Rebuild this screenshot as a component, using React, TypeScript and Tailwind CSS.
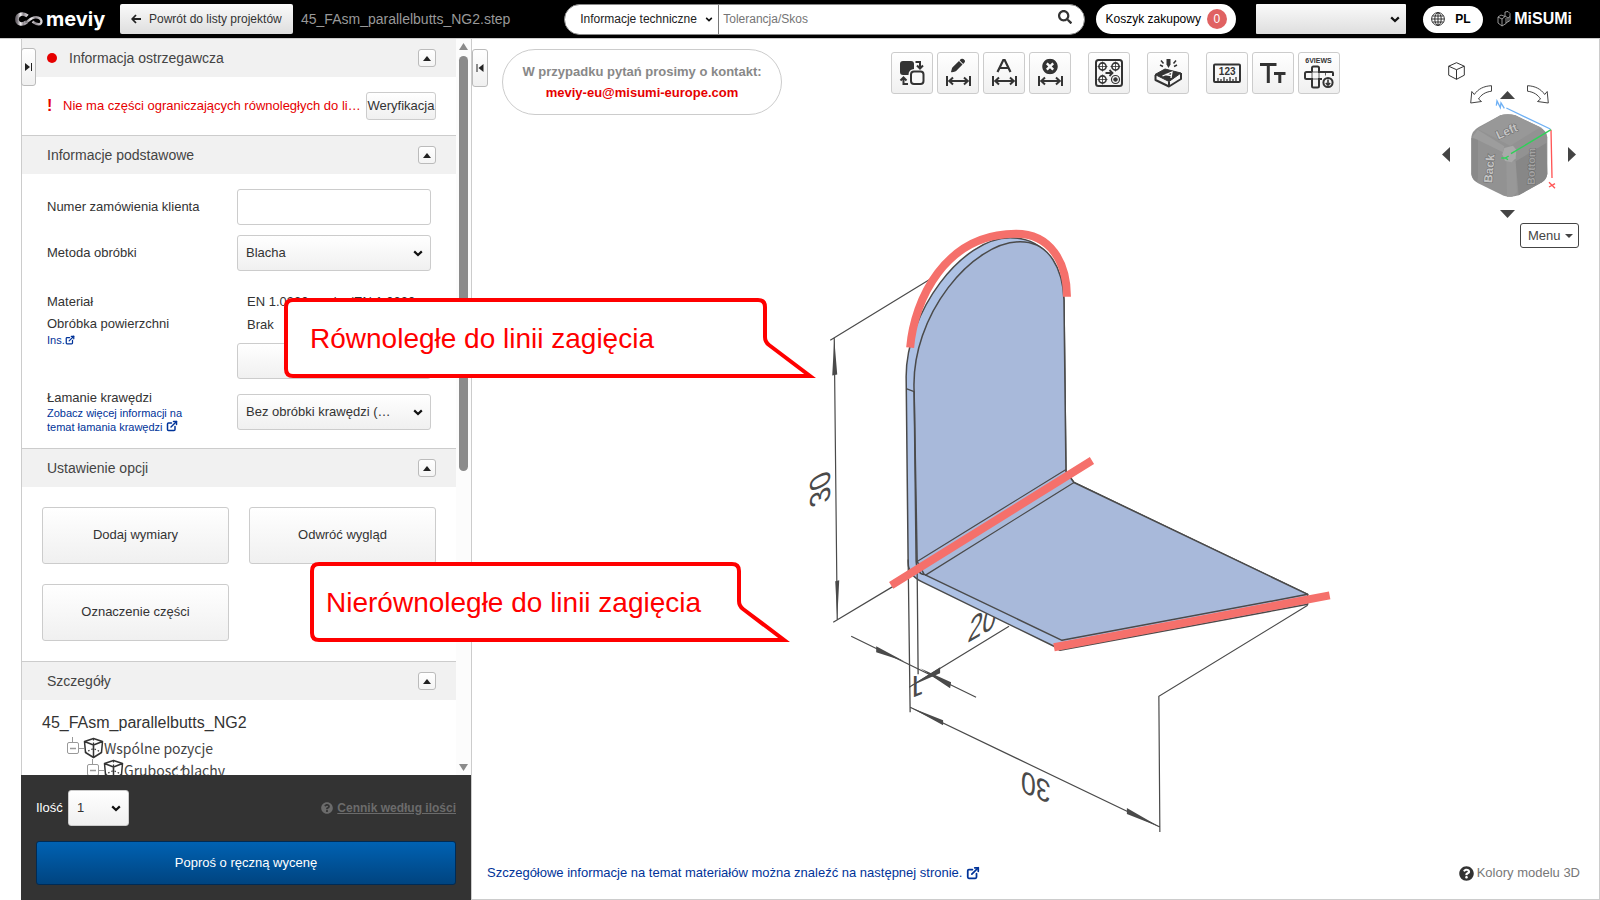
import React from 'react';
import { FaQuestionCircle, FaSearch, FaTimesCircle } from 'react-icons/fa';
import { FaPen } from 'react-icons/fa6';
import { FiExternalLink } from 'react-icons/fi';

const INK = '#333333';
const LINE = '#4a4a4a';
const MARK = '#f5706b';

function Chevron({ className = '' }: { className?: string }) {
  return (
    <svg viewBox="0 0 10 7" className={`pointer-events-none h-[7px] w-[10px] ${className}`} aria-hidden="true">
      <path d="M1.2 1.4 5 5l3.800-3.600" fill="none" stroke="#111" strokeWidth="2.200" />
    </svg>
  );
}

type SelectProps = { id?: string; label?: string; value: string; box: string };

function Select({ id, label, value, box }: SelectProps) {
  return (
    <div className="relative flex items-center">
      <select
        id={id}
        aria-label={label}
        className={`w-full appearance-none border border-[#ccc] bg-linear-to-b from-white to-[#f0f0f0] pl-2 text-[13px] text-[#333] ${box}`}
      >
        <option>{value}</option>
      </select>
      <Chevron className="absolute right-2" />
    </div>
  );
}

function Section({ title, first, alert, children }: { title: string; first?: boolean; alert?: boolean; children: React.ReactNode }) {
  return (
    <section>
      <div className={`flex items-center bg-[#f1f1f1] pr-5 pl-[25px] ${first ? 'h-[38px]' : 'h-[39px] border-t border-[#ccc]'}`}>
        {alert && <span className="mr-3 size-[10px] rounded-full bg-[#e60000]" />}
        <h2 className="text-[14px] text-[#444]">{title}</h2>
        <button
          aria-label={`Zwiń: ${title}`}
          className="ml-auto flex size-[18px] items-center justify-center rounded-[3px] border border-[#bbb] bg-linear-to-b from-white to-[#f4f4f4]"
        >
          <svg viewBox="0 0 8 5" className="h-[5px] w-2" aria-hidden="true">
            <path d="M0 5 4 0l4 5z" fill="#222" />
          </svg>
        </button>
      </div>
      {children}
    </section>
  );
}

function OptionButton({ children }: { children: React.ReactNode }) {
  return (
    <button className="h-[57px] rounded-[3px] border border-[#ccc] bg-linear-to-b from-white to-[#f0f0f0] pb-[2px] text-[13px] text-[#333]">
      {children}
    </button>
  );
}

function TreeRow({ children, indent }: { children: React.ReactNode; indent: string }) {
  return (
    <li className={`flex h-[22px] items-center ${indent}`}>
      <svg viewBox="0 0 37 22" className="h-[22px] w-[37px] shrink-0" fill="none" aria-hidden="true">
        <g stroke="#999">
          <path d="M5.500 0v5M12 11.500h5" />
          <rect x=".500" y="5.500" width="11" height="11" rx="1.500" />
          <path d="M3 11.500h6" strokeWidth="1.500" />
        </g>
        <g stroke={INK} strokeWidth="1.500" strokeLinejoin="round">
          <path d="m26.500 1.500 9 3-1 11-8 5-8-5-1-11zM17.500 4.500l9 3.500 9-3.500M26.500 8v12" />
          <path d="M26.500 2v10M18 15.500l8.500-4 8.500 4" strokeDasharray="1.500 2" strokeWidth="1.200" />
        </g>
      </svg>
      <span className="font-['Noto_Sans_CJK_JP',sans-serif] text-[14px] leading-[22px] whitespace-nowrap text-[#444]">{children}</span>
    </li>
  );
}

function Sidebar() {
  return (
    <aside className="relative ml-[21px] flex w-[451px] shrink-0 flex-col border-r border-[#ccc]">
      <button
        aria-label="Rozwiń panel"
        className="absolute top-[9px] left-0 z-10 flex h-[38px] w-[15px] items-center justify-center rounded-[3px] border border-[#bbb] bg-linear-to-b from-white to-[#f0f0f0]"
      >
        <svg viewBox="0 0 8 8" className="size-2" aria-hidden="true">
          <path d="M0 0v8l5-4z" fill="#222" />
          <path d="M6.500 0v8" stroke="#222" />
        </svg>
      </button>
      <div className="flex min-h-0 flex-1 border-l border-[#ccc]">
        <div className="min-w-0 flex-1 overflow-y-auto [scrollbar-width:none]">
          <Section title="Informacja ostrzegawcza" first alert>
            <div className="flex h-[58px] items-center pr-5 pl-[25px] text-[13px]">
              <span className="w-4 text-[16px] font-bold text-[#e60000]">!</span>
              <p className="min-w-0 flex-1 truncate text-[#e60000]">Nie ma części ograniczających równoległych do linii zagięcia</p>
              <button className="ml-[2px] h-7 w-[70px] rounded-[3px] border border-[#ccc] bg-linear-to-b from-white to-[#f0f0f0] whitespace-nowrap text-[#333]">
                Weryfikacja
              </button>
            </div>
          </Section>

          <Section title="Informacje podstawowe">
            <div className="pt-[15px] pr-[25px] pb-[14px] pl-[25px] text-[13px] text-[#333]">
              <div className="grid grid-cols-[190px_1fr] items-center gap-y-[10px]">
                <label htmlFor="order">Numer zamówienia klienta</label>
                <input id="order" type="text" className="h-9 w-full rounded-[3px] border border-[#ccc] bg-white px-2" />
                <label htmlFor="method">Metoda obróbki</label>
                <Select id="method" value="Blacha" box="h-9 rounded-[3px]" />
              </div>
              <div className="mt-5 grid grid-cols-[190px_1fr]">
                <div>
                  <p className="leading-[22px]">Materiał</p>
                  <p className="leading-[21px]">Obróbka powierzchni</p>
                  <a href="#finish" className="flex items-center text-[11px] leading-3 text-[#003399]">
                    Ins.
                    <FiExternalLink className="size-[10px]" strokeWidth={3} />
                  </a>
                </div>
                <div>
                  <p className="pl-[10px] leading-[22px] whitespace-nowrap">EN 1.0330 equiv. (EN 1.0330</p>
                  <p className="pl-[10px] leading-6">Brak</p>
                  <button aria-label="Zmień materiał" className="mt-[6px] block h-9 w-full rounded-[3px] border border-[#ccc] bg-linear-to-b from-white to-[#f0f0f0]" />
                </div>
              </div>
              <div className="mt-[11px] grid grid-cols-[190px_1fr] items-center">
                <div>
                  <label htmlFor="edge" className="block leading-4">Łamanie krawędzi</label>
                  <a href="#edges" className="block w-[150px] text-[11px] leading-[14px] text-[#003399]">
                    Zobacz więcej informacji na temat łamania krawędzi <FiExternalLink className="inline size-[12px] align-[-1px]" strokeWidth={3} />
                  </a>
                </div>
                <Select id="edge" value="Bez obróbki krawędzi (…" box="h-9 rounded-[3px]" />
              </div>
            </div>
          </Section>

          <Section title="Ustawienie opcji">
            <div className="grid grid-cols-2 gap-5 p-5">
              <OptionButton>Dodaj wymiary</OptionButton>
              <OptionButton>Odwróć wygląd</OptionButton>
              <OptionButton>Oznaczenie części</OptionButton>
            </div>
          </Section>

          <Section title="Szczegóły">
            <div className="px-5 pt-[9px] pb-6">
              <h3 className="text-[16px] leading-7 text-[#333]">45_FAsm_parallelbutts_NG2</h3>
              <ul>
                <TreeRow indent="pl-[25px]">Wspólne pozycje</TreeRow>
                <TreeRow indent="pl-[45px]">Grubość blachy</TreeRow>
              </ul>
            </div>
          </Section>
        </div>
        <div className="flex w-[15px] flex-col items-center bg-[#fcfcfc] pt-1 pb-1" aria-hidden="true">
          <svg viewBox="0 0 9 7" className="h-[7px] w-[9px] shrink-0">
            <path d="M0 7 4.500 0 9 7z" fill="#8b8b8b" />
          </svg>
          <div className="mt-[6px] h-[57%] w-[9px] rounded-full bg-[#8b8b8b]" />
          <svg viewBox="0 0 9 7" className="mt-auto h-[7px] w-[9px] shrink-0">
            <path d="M0 0 4.500 7 9 0z" fill="#8b8b8b" />
          </svg>
        </div>
      </div>

      <div className="bg-[#333] px-[15px] pt-[15px] pb-[15px] text-[13px] text-white">
        <div className="flex items-center">
          <label htmlFor="qty" className="w-8 font-medium">Ilość</label>
          <div className="w-[61px]">
            <Select id="qty" value="1" box="h-9 rounded-[3px]" />
          </div>
          <a href="#price-list" className="ml-auto flex items-center gap-1 text-[12px] font-bold text-[#6b6b6b]">
            <FaQuestionCircle className="size-3" />
            <span className="underline">Cennik według ilości</span>
          </a>
        </div>
        <button className="mt-[15px] h-11 w-full rounded-[3px] border border-[#002b55] bg-linear-to-b from-[#0062b3] to-[#004480] text-white">
          Poproś o ręczną wycenę
        </button>
      </div>
    </aside>
  );
}

function Header() {
  return (
    <header className="flex h-[39px] shrink-0 items-center border-b border-[#ccc] bg-black">
      <a href="#home" aria-label="meviy" className="ml-[15px] flex w-[105px] shrink-0 items-center gap-[2px] text-white">
        <svg viewBox="0 0 29 15" className="h-[15px] w-[29px] shrink-0" fill="none" aria-hidden="true">
          <defs>
            <linearGradient id="loop" x1="0" x2="1">
              <stop offset="0" stopColor="#6f6a70" />
              <stop offset=".35" stopColor="#f4f2f4" />
              <stop offset=".6" stopColor="#8d878e" />
              <stop offset="1" stopColor="#d8d5d8" />
            </linearGradient>
          </defs>
          <path d="M12.500 4C8.500.500 2 1.500 2 7.300c0 5 5 6.200 9.500 2.700" stroke="url(#loop)" strokeWidth="3.600" />
          <path d="M10.500 10.700C14.500 8 17 5 21 5.200c6.500.3 7 7 2.500 7-2.500 0-4-1.200-6-2.700" stroke="url(#loop)" strokeWidth="2.400" />
        </svg>
        <span className="font-['Inter',sans-serif] text-[20px] leading-none font-bold">meviy</span>
      </a>
      <button className="flex h-[30px] w-[173px] shrink-0 items-center rounded-[2px] bg-linear-to-b from-[#fafafa] to-[#dedede] pl-[11px] text-[12px] text-[#333]">
        <svg viewBox="0 0 10 10" className="mr-2 h-[10px] w-[10px]" aria-hidden="true">
          <path d="M10 5H1.500M5 1 1.200 5 5 9" fill="none" stroke="#222" strokeWidth="1.800" />
        </svg>
        Powrót do listy projektów
      </button>
      <span className="ml-2 text-[14px] text-[#999]">45_FAsm_parallelbutts_NG2.step</span>

      <form className="ml-auto flex h-[31px] w-[521px] items-center overflow-hidden rounded-full border border-[#888] bg-white" onSubmit={(e) => e.preventDefault()}>
        <div className="relative flex h-full w-[154px] shrink-0 items-center border-r border-[#777]">
          <select aria-label="Kategoria wyszukiwania" className="h-full w-full appearance-none pl-[15px] text-[12px] text-[#222]">
            <option>Informacje techniczne</option>
          </select>
          <Chevron className="absolute right-1 scale-75" />
        </div>
        <input aria-label="Szukaj" type="text" placeholder="Tolerancja/Skos" className="h-full min-w-0 flex-1 pl-1 text-[12px] outline-none placeholder:text-[#757575]" />
        <button aria-label="Szukaj" className="mr-3 mb-1 p-0">
          <FaSearch className="size-[14px] text-[#333]" />
        </button>
      </form>

      <button className="ml-[11px] flex h-[30px] w-[140px] shrink-0 items-center justify-center gap-[6px] rounded-full bg-white text-[12px] text-black">
        Koszyk zakupowy
        <span className="flex size-5 items-center justify-center rounded-full bg-[#e06262] text-white">0</span>
      </button>
      <div className="relative ml-5 flex w-[150px] shrink-0 items-center">
        <select aria-label="Konto" className="h-[30px] w-full appearance-none rounded-[1px] bg-linear-to-b from-[#fafafa] to-[#dedede]">
          <option></option>
        </select>
        <Chevron className="absolute right-[6px]" />
      </div>
      <button className="ml-[17px] flex h-[27px] w-[60px] shrink-0 items-center gap-[10px] rounded-full bg-white pl-2 text-[12px] font-bold text-black">
        <svg viewBox="0 0 14 14" className="size-[14px]" fill="none" stroke="#222" strokeWidth=".9" aria-hidden="true">
          <circle cx="7" cy="7" r="6.400" />
          <ellipse cx="7" cy="7" rx="3.200" ry="6.300" />
          <path d="M7 .7v12.600M.7 7h12.600M1.500 4h11M1.500 10h11" />
        </svg>
        PL
      </button>
      <a href="#misumi" aria-label="MiSUMi" className="mr-7 ml-[14px] flex shrink-0 items-center gap-[3px] text-white">
        <svg viewBox="0 0 14 16" className="h-4 w-[14px]" fill="none" stroke="#bbb" strokeWidth=".8" aria-hidden="true">
          <path d="m1 6 4 2 3-2.500L4 4zM1 6v6l4 3V8M5 15l4-2.500V7M8 1l3-.500 2 2v7l-4 2.500M8 1v4l3 2 2-1.500M11 7v4" />
        </svg>
        <span className="text-[16px] leading-none font-bold">MiSUMi</span>
      </a>
    </header>
  );
}

function Tool({ label, children, gap }: { label: string; children: React.ReactNode; gap?: boolean }) {
  return (
    <button aria-label={label} className={`size-[42px] rounded-[3px] border border-[#ccc] bg-linear-to-b from-white to-[#f0f0f0] ${gap ? 'ml-[17px]' : 'ml-1'}`}>
      <svg viewBox="1 1 40 40" className="size-10" fill="none" stroke={INK} strokeWidth="2" aria-hidden="true">
        {children}
      </svg>
    </button>
  );
}

const span = <path d="M10 24v10M33 24v10M11.500 29h20M16 25.500 12.300 29l3.700 3.500M27 25.500l3.700 3.500-3.700 3.500" />;

function Toolbar() {
  return (
    <div className="mt-[13px] ml-[105px] flex shrink-0">
      <Tool label="Zamień powierzchnie">
        <rect x="9" y="9" width="14" height="14" rx="3" fill={INK} stroke="none" />
        <rect x="20" y="19.500" width="12.500" height="12.500" rx="3" fill="#f8f8f8" stroke="#f8f8f8" strokeWidth="5" />
        <rect x="20" y="19.500" width="12.500" height="12.500" rx="3" />
        <path d="M24.500 10H29v6.500M26 13.500l3 3 3-3M17 32h-4.500v-6.500M9.500 28.500l3-3 3 3" />
      </Tool>
      <Tool label="Edytuj wymiar">
        <FaPen x="14" y="6.500" size={14} color={INK} stroke="none" />
        {span}
      </Tool>
      <Tool label="Opis wymiaru">
        <path d="M14.500 20 20.300 8h1.400l5.800 12M16.500 16h9" strokeWidth="2.200" />
        {span}
      </Tool>
      <Tool label="Usuń wymiar">
        <FaTimesCircle x="13" y="6.500" size={16} color={INK} stroke="none" />
        {span}
      </Tool>
      <Tool label="Grupuj otwory" gap>
        <rect x="8" y="8" width="26" height="26" rx="2.500" />
        <g strokeWidth="1.600">
          {[[14.5, 14.5], [27.5, 14.5], [14.5, 27.5]].map(([x, y]) => (
            <g key={`${x}-${y}`}>
              <circle cx={x} cy={y} r="3.600" />
              <path d={`M${x - 5} ${y}h10M${x} ${y - 5}v10`} strokeWidth=".8" />
            </g>
          ))}
          <circle cx="27.500" cy="27.500" r="4" strokeWidth="1.200" />
          <circle cx="27.500" cy="27.500" r="1.800" fill={INK} strokeWidth="1" />
          <path d="M17.500 21h6M21.500 18 24.500 21l-3 3" strokeWidth="1.800" />
        </g>
      </Tool>
      <Tool label="Grawerowanie" gap>
        <path d="M19.500 7h4v5.500L21.500 16l-2-3.500z" fill={INK} stroke="none" />
        <path d="m14 8.500 2.500 3M13 13l3 1.500M29 8.500l-2.500 3M30 13l-3 1.500" strokeWidth="1.500" />
        <path d="m8 22.500 10-5.500 16 4-12 8.500z" fill={INK} strokeLinejoin="round" strokeWidth="1" />
        <path d="M8.500 23v5L22 34.500l12-7.500v-6M22 29.500v5" strokeLinejoin="round" />
        <path d="m15.500 24 9.500-4-1 6M18.500 22.500l5.500 1" stroke="#fff" strokeWidth="1.300" />
      </Tool>
      <Tool label="Pomiar" gap>
        <rect x="8" y="12.500" width="26" height="17.500" rx="1" />
        <text x="21.200" y="23" textAnchor="middle" fontSize="10" fontWeight="bold" fill={INK} stroke="none">123</text>
        <path d="M12 29v-3M15 29v-2M18 29v-4M21 29v-2M24 29v-4M27 29v-2M30 29v-4" strokeWidth="1.300" />
      </Tool>
      <Tool label="Rozmiar tekstu">
        <path d="M8 12.500h16.500M16.300 12.500V31M22 21.500h11.500M27.800 21.500V31" strokeWidth="3" />
      </Tool>
      <Tool label="Sześć widoków">
        <text x="20.500" y="11" textAnchor="middle" fontSize="7" fontWeight="bold" fill={INK} stroke="none">6VIEWS</text>
        <path d="M14 20V16a1.500 1.500 0 0 1 1.500-1.500h4A1.500 1.500 0 0 1 21 16v4h13a1 1 0 0 1 1 1V24M14 20H8.500A1.500 1.500 0 0 0 7 21.500v4A1.500 1.500 0 0 0 8.500 27h5.500V34a1.500 1.500 0 0 0 1.500 1.500h4A1.500 1.500 0 0 0 21 34v-7h3" />
        <path d="M14 20v7h7v-7zM27.500 20V23.500" strokeWidth=".8" />
        <circle cx="30" cy="30.500" r="4.600" />
        <path d="M30 27.500v5M27.800 31l2.200 2.200L32.200 31" strokeWidth="1.600" />
      </Tool>
    </div>
  );
}

function Arrow({ label, d, box, view }: { label: string; d: string; box: string; view: string }) {
  return (
    <button aria-label={label} className={box}>
      <svg viewBox={view} className="block size-full" fill="#444" aria-hidden="true">
        <path d={d} />
      </svg>
    </button>
  );
}

function ViewCube() {
  const turn = 'M21.500.7v5.500C15 7 11 10 8.500 14l3 2.500L.7 18 1.800 6.500l2.500 3C8 4 14 1 21.500.7z';
  return (
    <div className="mr-5 ml-auto flex shrink-0 flex-col items-end">
      <div className="mt-[23px] mr-[3px] flex w-[134px] flex-col items-center">
        <button aria-label="Widok izometryczny" className="ml-[6px] self-start">
          <svg viewBox="0 0 17 18" className="block h-[18px] w-[17px]" fill="none" stroke="#333" strokeLinejoin="round" aria-hidden="true">
            <path d="m8.500.7 7.800 3.500v9L8.500 17.300.7 13.200v-9zM.7 4.200l7.800 3.500 7.800-3.500M8.500 7.700v9.600" />
          </svg>
        </button>
        <div className="mt-[5px] flex items-center">
          <button aria-label="Obróć w lewo">
            <svg viewBox="0 0 22 19" className="block h-[19px] w-[22px]" fill="none" stroke="#444" aria-hidden="true">
              <path d={turn} />
            </svg>
          </button>
          <Arrow label="W górę" d="M0 8 7.500 0 15 8z" box="mr-3 ml-2 h-2 w-[15px]" view="0 0 15 8" />
          <button aria-label="Obróć w prawo">
            <svg viewBox="0 0 22 19" className="block h-[19px] w-[22px]" fill="none" stroke="#444" aria-hidden="true">
              <g transform="matrix(-1 0 0 1 22 0)">
                <path d={turn} />
              </g>
            </svg>
          </button>
        </div>
        <div className="mb-[6px] flex h-[100px] w-full items-center justify-between">
          <Arrow label="W lewo" d="M8 0v15L0 7.500z" box="h-[15px] w-2" view="0 0 8 15" />
          <svg viewBox="200 145 270 300" className="-mt-3 ml-[6px] h-[100px] w-[90px] overflow-visible" fill="none" aria-hidden="true">
            <path d="M300 197q22-7 45 0l75 36q20 12 21 30v110q-3 17-16 25l-70 39q-25 8-45 1l-78-38q-17-10-19-28V262q2-18 22-30z" fill="#929292" />
            <path d="M300 197q22-7 45 0l75 36-90 55-98-50z" fill="#989898" />
            <path d="m232 240 80 50-4 18-92-45z" fill="#9d9d9d" />
            <path d="m213 265 20 6v112l-3 14q-16-9-17-24z" fill="#8a8a8a" />
            <path d="M318 335h28l4 92-14 14h-16z" fill="#989898" />
            <path d="m346 335 92-55 3 93q-3 17-16 25l-70 39z" fill="#878787" />
            <path d="m312 295 26-7 10 12-2 26-12 12-20-4-8-20z" fill="#a9a9a9" />
            <g fontSize="36" fontWeight="bold" fill="#c4c4c4" stroke="#6a6a6a" strokeWidth="3" paintOrder="stroke">
              <text transform="translate(324 256) rotate(-24)" textAnchor="middle">Left</text>
              <text transform="translate(279 358) rotate(-85)" textAnchor="middle">Back</text>
              <text transform="translate(404 350) rotate(-89)" textAnchor="middle" fontSize="32" fill="#a3a3a3">Bottom</text>
            </g>
            <g strokeWidth="4">
              <path d="m318 175 132 63M288 168l2-14 10 20 2-14 10 16" stroke="#6fb1f5" />
              <path d="m452 240 3 145M446 398l18 18M464 402l-18 10" stroke="#f55" />
              <path d="m452 240-120 72M303 325h12l10-6M315 325l8 5" stroke="#2fd158" />
            </g>
          </svg>
          <Arrow label="W prawo" d="M0 0v15l8-7.500z" box="h-[15px] w-2" view="0 0 8 15" />
        </div>
        <Arrow label="W dół" d="M0 0h15L7.500 8z" box="mr-1 h-2 w-[15px]" view="0 0 15 8" />
      </div>
      <button className="mt-[5px] flex h-[25px] w-[59px] items-center justify-between rounded-[3px] border border-[#444] bg-white pr-[5px] pl-[7px] text-[13px] text-[#444]">
        Menu
        <svg viewBox="0 0 8 4" className="h-1 w-2" aria-hidden="true">
          <path d="M0 0h8L4 4z" fill="#444" />
        </svg>
      </button>
    </div>
  );
}

function PartDrawing() {
  return (
    <svg viewBox="472 39 1127 861" className="absolute inset-0 size-full" fill="none" role="img" aria-label="Model 3D">
      <g stroke={LINE} strokeWidth="1.200">
        <path d="M830 340.500 934 277M834 338l3 283M833 623l60-36" />
        <path d="m851 637 125 61M909 688l100-61M910 708l250 120M1160 833l-1-136 149-91" />
      </g>
      <g fill={LINE}>
        <path d="m834 339-2 37 5-1zM837 620l-2-38 4-1zM904 662l-28-15v6zM920 669l31 14-1 6zM910 687l30-19v6zM910 708l33 13v5zM1160 828l-33-19v6z" />
        <g fontFamily="Liberation Sans, sans-serif" fontSize="29" textAnchor="middle">
          <text transform="translate(830 485) rotate(-90) skewX(25)">30</text>
          <text transform="translate(981 636) rotate(-30) skewX(-38)">20</text>
          <text transform="translate(1036 777) rotate(203) skewX(22)">30</text>
          <text transform="translate(916 677) rotate(180)" fontFamily="Roboto, sans-serif">1</text>
        </g>
      </g>
      <g stroke={LINE} strokeWidth="1.500" strokeLinejoin="round">
        <path
          d="M908 563 906 377C906 312 962 238 1010 238c38 0 53 34 54 62l2 172 8 11 234 112v10l-248 46-6-4-131-64q-15-7-15-20z"
          fill="#adc1e4"
        />
        <path d="M914 392C910 315 973 242 1020 242c30 0 43 28 44 58l2 172 8 11 234 112-246 46-138-66-7-13z" fill="#a8b9da" />
        <path d="m906 389 8 3M917 562l149-92M925 576l149-93" strokeWidth="1.200" />
        <path d="m914 392 2 170q1 13 8 13" />
      </g>
      <path d="m908 560 2 153M917 570l1 105" stroke={LINE} strokeWidth="1.300" />
      <g stroke={MARK} strokeWidth="8">
        <path d="M910 348C914 300 945 234 1016 234c34 0 51 28 51 63" />
        <path d="m891 586 201-125M1054 648l276-52" />
      </g>
    </svg>
  );
}

function Callout({ children, place, width, text }: { children: React.ReactNode; place: string; width: number; text: string }) {
  const r = width - 49;
  return (
    <div className={`absolute z-20 ${place}`} style={{ width }}>
      <svg viewBox={`0 0 ${width} 80`} className="block h-20 w-full" aria-hidden="true">
        <path
          d={`M9 2H${r - 9}q7 0 7 7V39q0 5 4 8L${width - 6} 78H9q-7 0-7-7V9q0-7 7-7z`}
          fill="#fff"
          stroke="#f00"
          strokeWidth="4"
        />
      </svg>
      <p className={`absolute top-[25px] text-[28px] leading-8 whitespace-nowrap text-[#f00] ${text}`}>{children}</p>
    </div>
  );
}

export default function App() {
  return (
    <div className="relative flex h-screen flex-col overflow-hidden bg-white font-['Liberation_Sans',Arial,sans-serif]">
      <Header />
      <div className="flex min-h-0 flex-1">
        <Sidebar />
        <main className="relative flex min-w-0 flex-1 flex-col border-r border-b border-[#ccc]">
          <PartDrawing />
          <button
            aria-label="Zwiń panel"
            className="absolute top-[10px] left-0 flex h-[38px] w-4 items-center justify-center rounded-[3px] border border-[#bbb] bg-linear-to-b from-white to-[#f0f0f0]"
          >
            <svg viewBox="0 0 8 8" className="size-2" aria-hidden="true">
              <path d="M7.500 0v8l-5-4z" fill="#222" />
              <path d="M1 0v8" stroke="#222" />
            </svg>
          </button>
          <div className="relative flex items-start">
            <div className="mt-[10px] ml-[30px] h-[66px] w-[280px] shrink-0 rounded-full border border-[#ccc] pt-[11px] text-center text-[13px] leading-[21px] font-bold">
              <p className="text-[#888]">W przypadku pytań prosimy o kontakt:</p>
              <a href="mailto:meviy-eu@misumi-europe.com" className="text-[#e60000]">meviy-eu@misumi-europe.com</a>
            </div>
            <Toolbar />
            <ViewCube />
          </div>
          <div className="relative mt-auto flex items-center justify-between pr-[19px] pb-[18px] pl-[15px] text-[13px] leading-4">
            <a href="#materials" className="flex items-center gap-1 text-[#003399]">
              Szczegółowe informacje na temat materiałów można znaleźć na następnej stronie.
              <FiExternalLink className="size-[14px]" strokeWidth={3} />
            </a>
            <button className="flex items-center gap-[3px] text-[#777]">
              <FaQuestionCircle className="size-[15px] text-[#333]" />
              Kolory modelu 3D
            </button>
          </div>
        </main>
      </div>
      <Callout place="top-[298px] left-[284px]" width={532} text="left-[26px]">Równoległe do linii zagięcia</Callout>
      <Callout place="top-[562px] left-[310px]" width={480} text="left-4">Nierównoległe do linii zagięcia</Callout>
    </div>
  );
}
